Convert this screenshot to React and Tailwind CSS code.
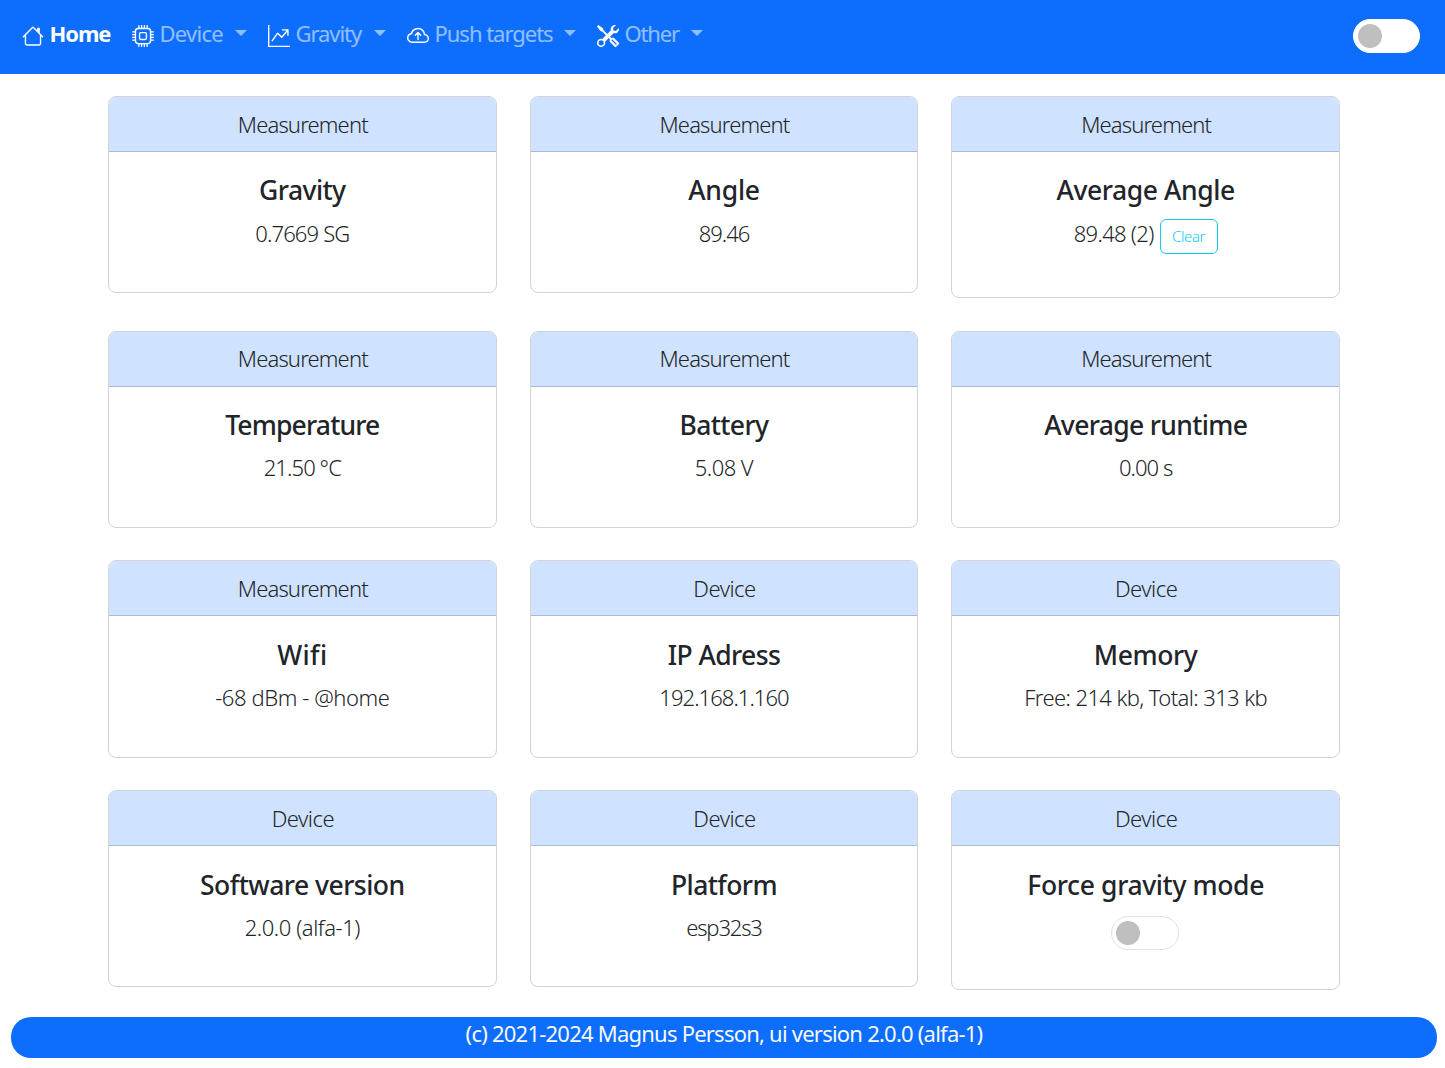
import React from "react";
import { BsHouse, BsCpu, BsGraphUpArrow, BsCloudArrowUp, BsTools } from "react-icons/bs";

const navItems = [
  { label: "Home", icon: BsHouse, width: "w-[110px]", text: "font-bold text-white tracking-[-1.1px]", active: true },
  { label: "Device", icon: BsCpu, width: "w-[136px]", text: "text-white/55 tracking-[-0.75px]" },
  { label: "Gravity", icon: BsGraphUpArrow, width: "w-[139px]", text: "text-white/55 tracking-[-1.05px]" },
  { label: "Push targets", icon: BsCloudArrowUp, width: "w-[190px]", text: "text-white/55 tracking-[-1.02px]" },
  { label: "Other", icon: BsTools, width: "w-[127px]", text: "text-white/55 tracking-[-1.16px]" },
];

const rows = [
  {
    className: "h-[235px]",
    header: "leading-[54px]",
    body: "pt-[22px]",
    title: "mb-[10px]",
    cards: [
      { group: "Measurement", title: "Gravity", titleClass: "tracking-[-0.56px]", value: "0.7669 SG", valueClass: "tracking-[-0.85px]" },
      { group: "Measurement", title: "Angle", titleClass: "tracking-[-0.24px]", value: "89.46", valueClass: "tracking-[-1px]" },
      { group: "Measurement", title: "Average Angle", titleClass: "tracking-[-0.42px]", value: "89.48 (2)", valueClass: "tracking-[-0.7px]", height: "h-[202px]", action: "Clear" },
    ],
  },
  {
    className: "h-[229px]",
    header: "leading-[52px]",
    body: "pt-[22px]",
    title: "mb-[9px]",
    cards: [
      { group: "Measurement", title: "Temperature", titleClass: "tracking-[-0.83px]", value: "21.50 °C", valueClass: "tracking-[-0.9px]" },
      { group: "Measurement", title: "Battery", titleClass: "tracking-[-0.6px]", value: "5.08 V", valueClass: "tracking-[-0.55px]" },
      { group: "Measurement", title: "Average runtime", titleClass: "tracking-[-0.66px]", value: "0.00 s", valueClass: "tracking-[-0.95px]" },
    ],
  },
  {
    className: "h-[230px]",
    header: "leading-[54px]",
    body: "pt-[23px]",
    title: "mb-[9px]",
    cards: [
      { group: "Measurement", title: "Wifi", titleClass: "tracking-[0.4px]", value: "-68 dBm - @home", valueClass: "tracking-[-0.42px]", height: "h-[198px]" },
      { group: "Device", title: "IP Adress", titleClass: "tracking-[-0.6px]", value: "192.168.1.160", valueClass: "tracking-[-0.95px]", height: "h-[198px]" },
      { group: "Device", title: "Memory", titleClass: "tracking-[-0.4px]", value: "Free: 214 kb, Total: 313 kb", valueClass: "tracking-[-0.6px]", height: "h-[198px]" },
    ],
  },
  {
    className: "h-[227px]",
    header: "leading-[54px]",
    body: "pt-[23px]",
    title: "mb-[9px]",
    cards: [
      { group: "Device", title: "Software version", titleClass: "tracking-[-0.52px]", value: "2.0.0 (alfa-1)", valueClass: "tracking-[-0.45px]" },
      { group: "Device", title: "Platform", titleClass: "tracking-[-0.58px]", value: "esp32s3", valueClass: "tracking-[-1.15px]" },
      { group: "Device", title: "Force gravity mode", titleClass: "tracking-[-0.37px]", toggle: true, height: "h-[200px]" },
    ],
  },
];

function Toggle({ className }) {
  return (
    <button
      type="button"
      role="switch"
      aria-checked="false"
      className={`flex h-[34px] shrink-0 items-center rounded-full border bg-white pl-1 ${className}`}
    >
      <span className="size-6 rounded-full bg-[#bfbfbf]" />
    </button>
  );
}

function NavItem({ item }) {
  const Icon = item.icon;
  return (
    <a className={`flex items-start whitespace-nowrap ${item.width}`}>
      <Icon className="mt-[25px] size-[22px] shrink-0 text-white" />
      <span className={`ml-[5.5px] mt-4 flex-1 text-[22px] leading-[34px] ${item.text}`}>{item.label}</span>
      {!item.active && (
        <span className="mr-[21px] mt-[30px] border-x-[6px] border-t-[6px] border-x-transparent border-t-white/55" />
      )}
    </a>
  );
}

function Card({ card, row }) {
  return (
    <section className={`flex flex-col overflow-hidden rounded-lg border border-[#d2d3d4] bg-white text-center ${card.height || "h-[197px]"}`}>
      <header className={`h-[55px] shrink-0 border-b border-[#a9b9d6] bg-[#cfe2ff] pl-px text-[22px] font-[350] ${row.header} ${card.group === "Device" ? "tracking-[-0.5px]" : "tracking-[-0.85px]"}`}>
        {card.group}
      </header>
      <div className={`flex flex-col items-center ${row.body}`}>
        <h5 className={`text-[26.5px] font-medium leading-8 ${row.title} ${card.titleClass}`}>{card.title}</h5>
        {card.toggle ? (
          <Toggle className="mr-px mt-[6px] w-[68px] border-[#dee2e6]" />
        ) : (
          <div className="flex items-start gap-[6px]">
            <p className={`text-[22px] font-[350] leading-[34px] ${card.valueClass}`}>{card.value}</p>
            {card.action && (
              <button type="button" className="mt-[3px] h-[35px] w-[58px] rounded-md border border-[#0dcaf0] text-[15px] font-[350] leading-[33px] tracking-[-0.42px] text-[#0dcaf0]">
                {card.action}
              </button>
            )}
          </div>
        )}
      </div>
    </section>
  );
}

export default function App() {
  return (
    <div className="h-[1068px] w-[1445px] overflow-hidden bg-white font-['Noto_Sans',sans-serif] text-[#212529]">
      <nav className="flex h-[74px] items-start justify-between bg-[#0d6efd] pl-[22px] pr-[25px]">
        <div className="flex">
          {navItems.map((item) => (
            <NavItem key={item.label} item={item} />
          ))}
        </div>
        <Toggle className="mt-[19px] w-[67px] border-white" />
      </nav>

      <main className="ml-[108px] mt-[22px] w-[1232px]">
        {rows.map((row, i) => (
          <div key={i} className={`grid grid-cols-3 items-start gap-x-[33px] ${row.className}`}>
            {row.cards.map((card) => (
              <Card key={card.title} card={card} row={row} />
            ))}
          </div>
        ))}
      </main>

      <footer className="ml-[11px] mr-2 h-[41px] rounded-[20px] bg-[#0d6efd] text-center text-[22px] leading-[33px] tracking-[-0.77px] text-[#f8f9fa]">
        (c) 2021-2024 Magnus Persson, ui version 2.0.0 (alfa-1)
      </footer>
    </div>
  );
}
